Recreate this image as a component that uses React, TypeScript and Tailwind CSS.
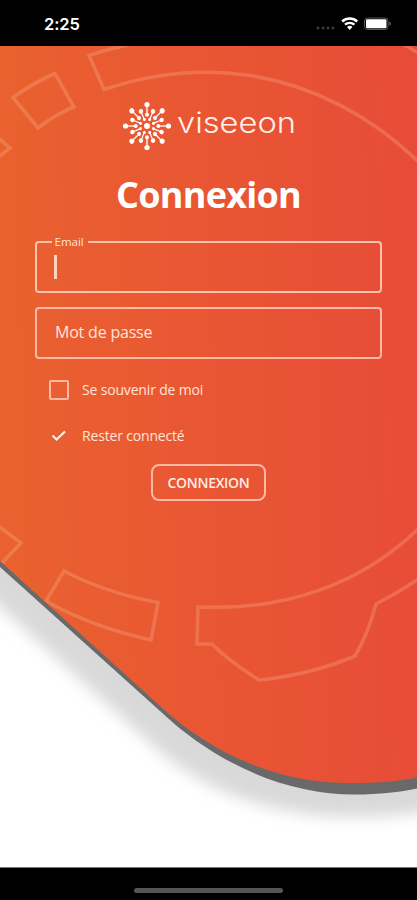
import React from "react";

const FONT = "font-['Open_Sans','Noto_Sans',sans-serif]";

function StatusBar() {
  return (
    <header className="flex h-[46px] shrink-0 items-center justify-between bg-black pr-[26px] pl-[44px]">
      <span className="mt-[2px] font-['Inter',sans-serif] text-[16.5px] leading-5 font-semibold tracking-[-0.1px] text-white">
        2:25
      </span>
      <svg width="75" height="16" viewBox="0 0 75 16" className="mt-[2px]">
        <g fill="#3a3a3a">
          <circle cx="2" cy="12" r="1.5" />
          <circle cx="7" cy="12" r="1.5" />
          <circle cx="12" cy="12" r="1.5" />
          <circle cx="17" cy="12" r="1.5" />
        </g>
        <g fill="none" stroke="#fff" strokeWidth="2.4">
          <path d="M26.2 5.5a11 11 0 0 1 15 0" />
          <path d="M29 8.7a7 7 0 0 1 9.4 0" />
        </g>
        <path d="M31 11.1a4 4 0 0 1 5.4 0l-2.7 2.8z" fill="#fff" />
        <rect x="48.5" y="2" width="23.5" height="11.5" rx="3" fill="none" stroke="#5b5b5b" />
        <rect x="50" y="3.3" width="20.5" height="9" rx="1.3" fill="#fff" />
        <path d="M73.3 5.7q1.6.4 1.6 2t-1.6 2z" fill="#6b6b6b" />
      </svg>
    </header>
  );
}

function Backdrop() {
  return (
    <svg className="absolute inset-0" width="417" height="821" viewBox="0 46 417 821">
      <defs>
        <linearGradient id="warm" gradientUnits="userSpaceOnUse" x1="0" y1="410" x2="417" y2="400">
          <stop offset="0" stopColor="#e9622f" />
          <stop offset="0.5" stopColor="#e95633" />
          <stop offset="1" stopColor="#e74c38" />
        </linearGradient>
        <filter id="soft" x="-20%" y="-20%" width="140%" height="140%">
          <feGaussianBlur stdDeviation="7.5" />
        </filter>
        <clipPath id="panel">
          <path d="M0 46H417V777.5C395 782 375 783 350 783C275 783 210 752 160 706L0 561Z" />
        </clipPath>
      </defs>
      <path
        d="M-60 0H480V795C440 812 400 817 355 817C270 817 200 790 150 743L0 607L-60 552Z"
        fill="#d9d9d9"
        filter="url(#soft)"
      />
      <path d="M0 46H417V788.5C400 792 380 794.5 355 794.5C285 794.5 215 763 160 711L0 567Z" fill="#696969" />
      <g clipPath="url(#panel)">
        <rect y="46" width="417" height="750" fill="url(#warm)" />
        <g fill="none" stroke="#ffc0a4" strokeOpacity="0.26" strokeWidth="3.6">
          <path d="M128 45Q108 49 89 55.500L104 89.500C150 74 200 68 250 75.500C315 86 372 117 420 163" />
          <path d="M403 44L420 54" />
          <path d="M55 73.500Q33 83 13 97.500L38 128Q55 114.500 74 107Z" />
          <path d="M-5 135L10 148L-4 159" />
          <path d="M-3 525L21 543L2 563" />
          <path d="M64 571L46 601Q92 627 151 640L158 602.500Q106 593 64 571Z" />
          <path d="M420 527C360 586 282 611 198 607L197 644H212C225 657 243 670 259 680Q310 675 355 656Q369 632 376 604Q398 593 420 578" />
        </g>
      </g>
    </svg>
  );
}

const SPOKES = [0, 45, 90, 135, 180, 225, 270, 315];
const TWIGS = [22.5, 67.5, 112.5, 157.5, 202.5, 247.5, 292.5, 337.5];

function Logo() {
  return (
    <svg width="176" height="52" viewBox="0 0 176 52" role="img" aria-label="viseeon">
      <g transform="translate(26 26)" fill="#fff" stroke="#fff">
        {SPOKES.map((a) => (
          <g key={a} transform={`rotate(${a})`}>
            <path d="M0-10.500V-21" strokeWidth="1.300" />
            <circle cy="-21.500" r="2.600" stroke="none" />
            <circle cy="-11.300" r="2" stroke="none" />
          </g>
        ))}
        {TWIGS.map((a) => (
          <g key={a} transform={`rotate(${a})`}>
            <path d="M0-7V-15" strokeWidth="1.200" />
            <circle cy="-15.800" r="2.200" stroke="none" />
            <circle cy="-7" r="1.500" stroke="none" />
          </g>
        ))}
        <circle r="3" stroke="none" />
      </g>
      <text
        x="56"
        y="32.500"
        textLength="119"
        lengthAdjust="spacingAndGlyphs"
        className="fill-[#fff1ea] font-['Inter',sans-serif] text-[28px] font-light"
      >
        viseeon
      </text>
    </svg>
  );
}

export default function App() {
  return (
    <div className={`flex h-[900px] w-[417px] flex-col overflow-hidden bg-white ${FONT}`}>
      <StatusBar />
      <main className="relative h-[821px] shrink-0">
        <Backdrop />
        <form className="relative flex flex-col px-[35px]">
          <div className="mt-[54px] ml-[86px] h-[52px]">
            <Logo />
          </div>
          <h1 className="mt-[20px] text-center text-[36px] leading-[46px] font-bold tracking-[-0.75px] text-white">
            Connexion
          </h1>
          <fieldset className="mt-[16px] h-[59px] rounded-[4px] border-[2px] border-[#ffc3ad]">
            <legend className="ml-[14.500px] pr-[4px] pl-[3px] text-[11.500px] leading-[16px] font-medium text-[#ffe4d9]">
              Email
            </legend>
            <div className="mt-[5px] ml-[17px] h-6 w-[3px] bg-[#ffd3bc]" />
          </fieldset>
          <div className="mt-[14px] flex h-[52px] items-center rounded-[4px] border-2 border-[#ffb8a3] pb-[2px] pl-[18px] text-[16px] font-medium tracking-[-0.2px] text-[#ffe4d9]">
            Mot de passe
          </div>
          <label className="mt-[21px] ml-[14px] flex h-5 items-center text-[14px] font-medium tracking-[-0.17px] text-[#ffe4d9]">
            <span className="mr-[13px] size-[20px] rounded-[2px] border-2 border-[#ffb8a3]" />
            <span className="-mt-[2px]">Se souvenir de moi</span>
          </label>
          <label className="mt-[26px] ml-[14px] flex h-5 items-center text-[14px] font-medium tracking-[-0.17px] text-[#ffe4d9]">
            <svg width="20" height="20" viewBox="0 0 20 20" className="mr-[13px]">
              <path d="M3.500 9.500L7.500 13.500L16 5.500" fill="none" stroke="#fff0e8" strokeWidth="2.200" />
            </svg>
            <span className="-mt-[2px]">Rester connecté</span>
          </label>
          <button
            type="button"
            className="mt-[18px] ml-[116px] flex h-[37px] w-[115px] items-center justify-center rounded-[8px] border-2 border-[#ffb8a3] text-[14px] font-semibold tracking-[-0.3px] text-[#ffeee6]"
          >
            CONNEXION
          </button>
        </form>
      </main>
      <footer className="flex h-[33px] shrink-0 justify-center border-t border-[#777] bg-black pt-[20px]">
        <div className="h-[5px] w-[149px] rounded-full bg-[#555]" />
      </footer>
    </div>
  );
}
